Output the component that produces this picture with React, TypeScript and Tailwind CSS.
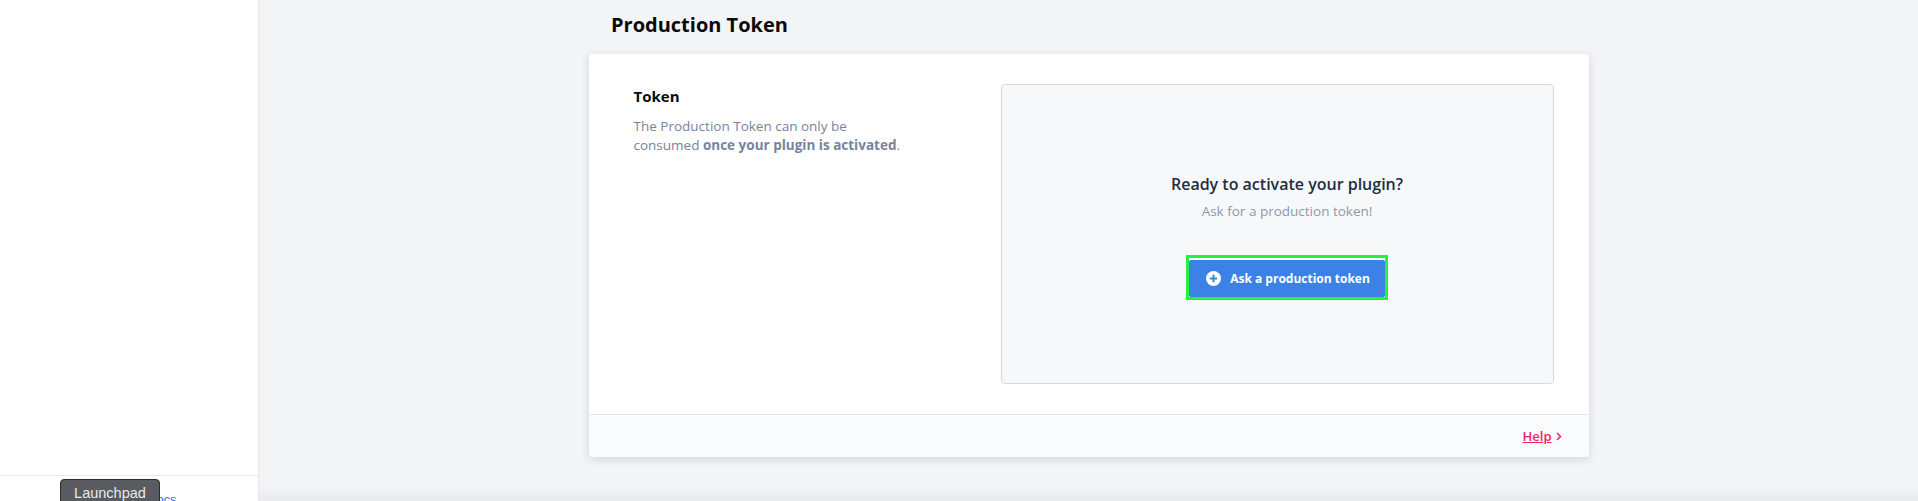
import React from "react";

export default function App() {
  return (
    <div className="relative flex h-[501px] w-[1918px] overflow-hidden bg-[#f3f4f6] font-['Open_Sans',sans-serif]">
      <aside className="flex h-full w-[259px] shrink-0 flex-col border-r border-[#e8e8e8] bg-white">
        <div className="flex-1" />
        <div className="h-[26px] border-t border-[#e8e8e8] pl-[147px] pt-[16px] font-['Liberation_Sans',sans-serif] text-[13px] leading-[16px] text-[#2f78e0]">
          Docs
        </div>
      </aside>
      <main className="relative flex-1">
        <div className="mx-auto w-[1000px]">
          <h1 className="ml-[22.5px] h-[54px] pt-[9px] text-[20px] font-bold leading-[32px] text-[#0a0a0a]">Production Token</h1>
          <section className="overflow-hidden rounded-[4px] bg-white shadow-[0_2px_8px_rgba(60,70,90,0.18)]">
            <div className="flex h-[360px] pl-[45px] pt-[30px]">
              <div className="w-[367px]">
                <h2 className="text-[15px] font-bold leading-[24px] text-[#0a0a0a]">Token</h2>
                <p className="mt-[9px] w-[290px] text-[13.5px] leading-[19px] text-[#76849c]">
                  The Production Token can only be
                  <br />
                  consumed <strong className="font-bold">once your plugin is activated</strong>.
                </p>
              </div>
              <div className="flex h-[300px] w-[553px] flex-col items-center rounded-[4px] border border-[#d8d9dc] bg-[#f7f8fa] pl-[20px] pt-[87px]">
                <h3 className="text-[16px] font-semibold leading-[24px] text-[#1f2d42]">Ready to activate your plugin?</h3>
                <p className="mt-[3px] text-[13.5px] leading-[24px] text-[#8c99ad]">Ask for a production token!</p>
                <div className="mt-[32px] h-[45px] w-[202px] border-[3px] border-[#22f13d] bg-white pt-[2px]">
                  <button className="flex h-[37px] w-full items-center justify-center gap-[9px] rounded-[2px] bg-[#3c82e6] pl-[2px] text-[12px] font-bold text-white">
                    <svg width="15" height="15" viewBox="0 0 15 15" aria-hidden="true">
                      <circle cx="7.5" cy="7.5" r="7.5" fill="#fff" />
                      <path d="M7.5 3.8v7.4M3.8 7.5h7.4" stroke="#3c82e6" strokeWidth="2" />
                    </svg>
                    Ask a production token
                  </button>
                </div>
              </div>
            </div>
            <div className="flex h-[43px] items-center justify-end gap-[4px] border-t border-[#e3e6ec] bg-[#fafbfc] pr-[27px]">
              <a className="text-[13px] font-semibold leading-[18px] text-[#f0245f] underline">Help</a>
              <svg width="6" height="9" viewBox="0 0 6 9" fill="none" aria-hidden="true">
                <path d="M1 1l3.5 3.5L1 8" stroke="#f0245f" strokeWidth="1.5" />
              </svg>
            </div>
          </section>
        </div>
      </main>
      <div className="absolute left-[60px] top-[479px] h-[30px] w-[100px] rounded-[4px] border border-[#2a2d31] bg-[#585c61] text-center font-['Liberation_Sans',sans-serif] text-[14.5px] leading-[26px] text-[#e8e8e8]">
        Launchpad
      </div>
      <div className="absolute bottom-0 left-[259px] right-0 h-[16px] bg-gradient-to-b from-transparent to-[#e9eaed]" />
    </div>
  );
}
